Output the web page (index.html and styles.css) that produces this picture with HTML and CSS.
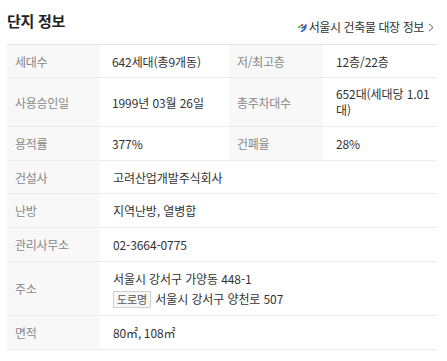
FILE: index.html
```html
<!DOCTYPE html>
<html lang="ko">
<head>
<meta charset="utf-8">
<link rel="stylesheet" href="styles.css">
</head>
<body>
<div class="panel">
  <div class="head">
    <h2 class="title">단지 정보</h2>
    <a class="ledger">
      <svg class="seoul" width="9" height="9" viewBox="0 0 9 9">
        <path d="M0.6 4.4 L2.6 3" stroke="#3aa845" stroke-width="1.5" stroke-linecap="round" fill="none"/>
        <circle cx="4.1" cy="2.1" r="1.2" fill="#e63a3a"/>
        <path d="M4 4.9 C6.2 4.3 8 3.2 7.9 1.4 C8.2 4.6 6.6 7 3.4 8.6" stroke="#2a63c4" stroke-width="1.6" stroke-linecap="round" fill="none"/>
      </svg>
      <span>서울시 건축물 대장 정보</span>
      <svg class="chev" width="6" height="9" viewBox="0 0 6 9"><path d="M1 0.8 L5 4.5 L1 8.2" stroke="#555" stroke-width="1" fill="none"/></svg>
    </a>
  </div>
  <table class="info">
    <colgroup>
      <col class="c1"><col class="c2"><col class="c3"><col class="c4">
    </colgroup>
    <tr class="first">
      <th>세대수</th><td>642세대(총9개동)</td>
      <th>저/최고층</th><td>12층/22층</td>
    </tr>
    <tr class="tall">
      <th>사용승인일</th><td>1999년 03월 26일</td>
      <th>총주차대수</th><td class="wrap">652대(세대당 1.01대)</td>
    </tr>
    <tr>
      <th>용적률</th><td>377%</td>
      <th>건폐율</th><td>28%</td>
    </tr>
    <tr class="short">
      <th>건설사</th><td colspan="3">고려산업개발주식회사</td>
    </tr>
    <tr>
      <th>난방</th><td colspan="3">지역난방, 열병합</td>
    </tr>
    <tr>
      <th>관리사무소</th><td colspan="3">02-3664-0775</td>
    </tr>
    <tr class="addr">
      <th>주소</th>
      <td colspan="3">
        <div class="line">서울시 강서구 가양동 448-1</div>
        <div class="line"><span class="badge">도로명</span> 서울시 강서구 양천로 507</div>
      </td>
    </tr>
    <tr>
      <th>면적</th><td colspan="3">80㎡, 108㎡</td>
    </tr>
  </table>
</div>
</body>
</html>
```

FILE: styles.css
```css
html, body {
  margin: 0;
  padding: 0;
  background: #fff;
}
body {
  font-family: "Noto Sans CJK KR", "Noto Sans", sans-serif;
  color: #333;
}
.panel {
  width: 430px;
  margin-left: 7px;
}
.head {
  display: flex;
  justify-content: space-between;
  align-items: flex-end;
  height: 44px;
}
.title {
  margin: 0;
  font-size: 15px;
  font-weight: bold;
  color: #222;
  line-height: 20px;
  align-self: flex-start;
  margin-top: 11px;
  letter-spacing: -0.3px;
}
.ledger {
  display: flex;
  align-items: center;
  gap: 1px;
  font-size: 12px;
  color: #333;
  letter-spacing: -0.4px;
  margin-bottom: 9px;
  margin-right: 3px;
  line-height: 16px;
}
.seoul {
  margin-right: 1px;
}
.chev {
  margin-left: 3px;
}
.info {
  width: 430px;
  border-collapse: collapse;
  table-layout: fixed;
  border-top: 1px solid #e3e3e3;
  font-size: 12px;
}
.c1 { width: 93px; }
.c2 { width: 129px; }
.c3 { width: 94px; }
.c4 { width: 114px; }
.info tr {
  border-bottom: 1px solid #ececec;
  height: 34px;
}
.info tr.first,
.info tr.short {
  height: 33px;
}
.info th {
  background: #f8f8f8;
  color: #888;
  font-weight: normal;
  text-align: left;
  padding: 0 0 0 8px;
  letter-spacing: -0.3px;
}
.info td {
  color: #333;
  padding: 0 0 0 12px;
  letter-spacing: -0.1px;
}
.info td:last-child {
  padding-left: 13px;
}
.info tr.tall {
  height: 49px;
}
.info td.wrap {
  line-height: 16px;
  padding-right: 2px;
  word-break: break-all;
}
.info tr.addr {
  height: 54px;
}
.line {
  line-height: 20px;
}
.badge {
  display: inline-block;
  border: 1px solid #cfcfcf;
  background: #f7f7f7;
  color: #555;
  font-size: 11px;
  line-height: 15px;
  padding: 0 3px;
  margin-right: 1px;
}
```
